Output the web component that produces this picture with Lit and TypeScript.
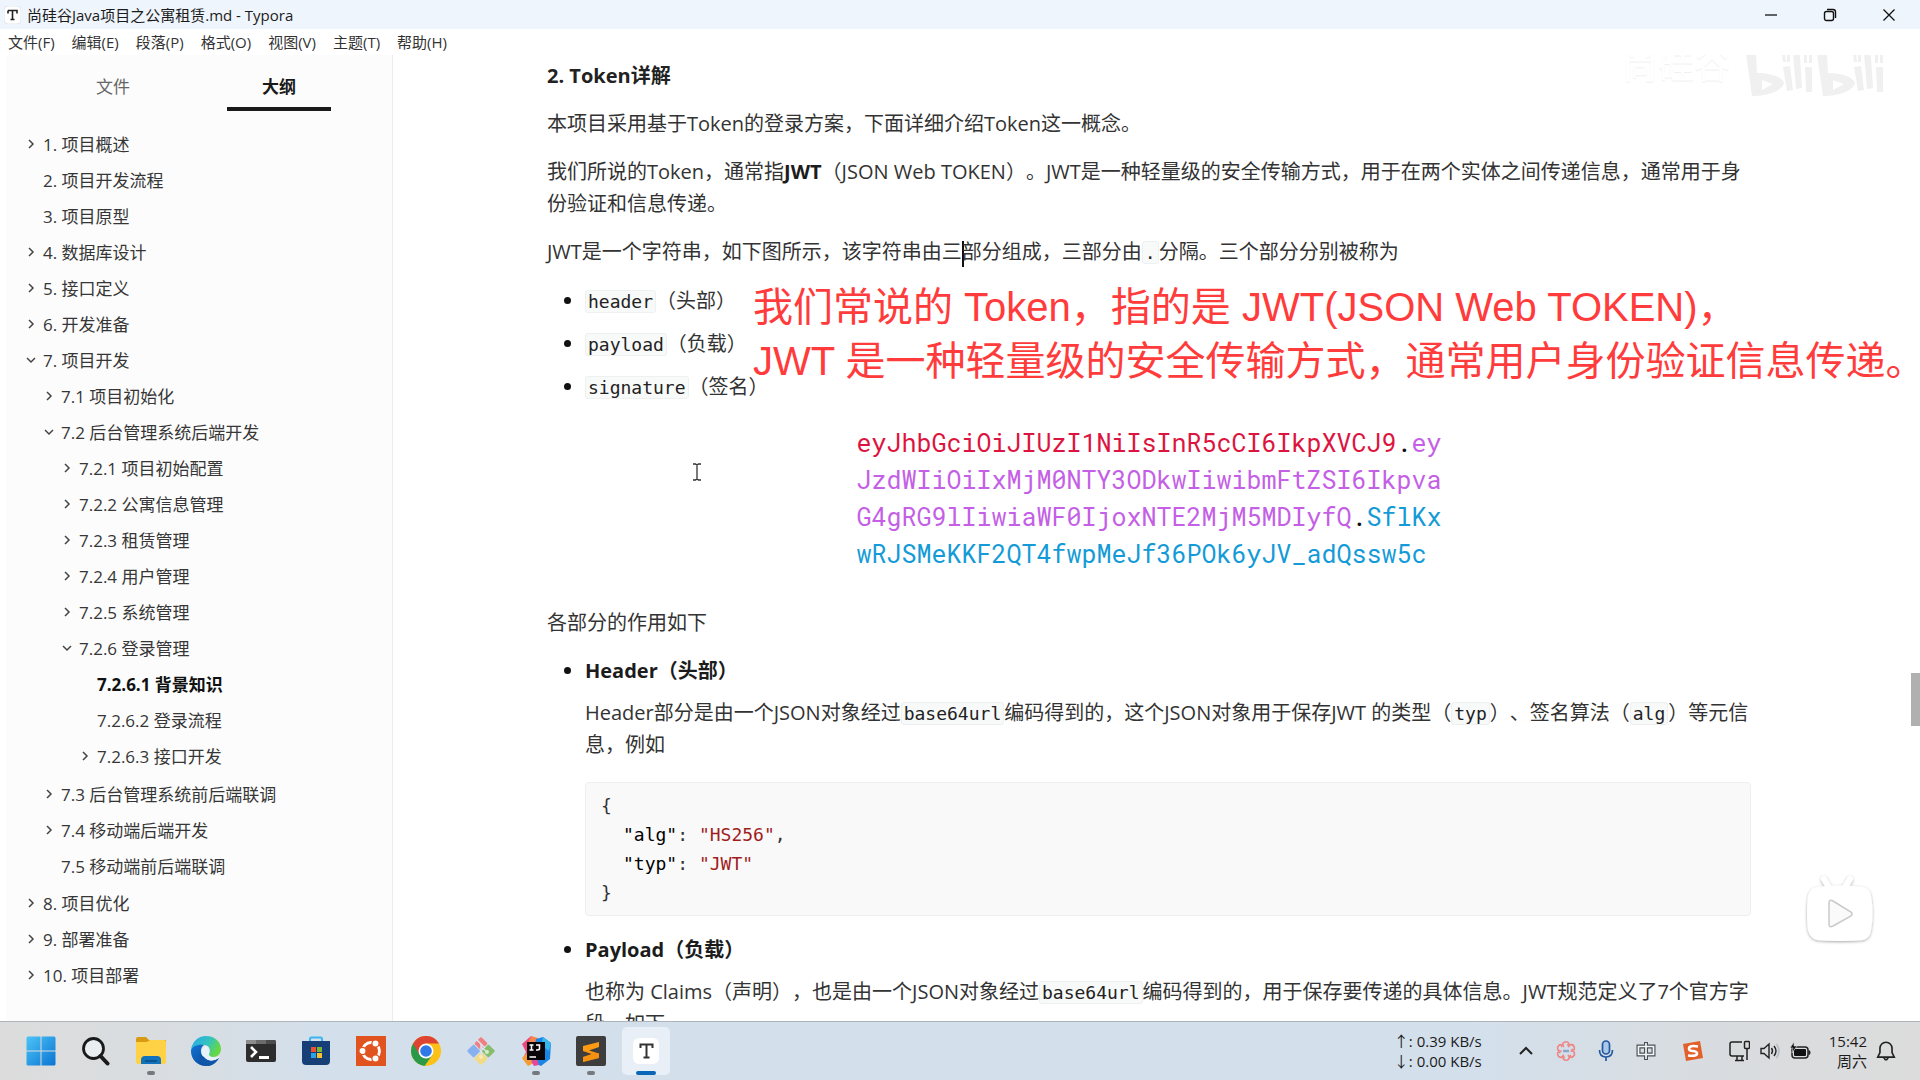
import { LitElement, html, css, svg, nothing } from "lit";
import { customElement, property } from "lit/decorators.js";
import { classMap } from "lit/directives/class-map.js";

interface OutlineNode {
  label: string;
  state?: "open" | "closed";
  current?: boolean;
  children?: OutlineNode[];
}

const MENUS = ["文件(F)", "编辑(E)", "段落(P)", "格式(O)", "视图(V)", "主题(T)", "帮助(H)"];

const OUTLINE: OutlineNode[] = [
  { label: "1. 项目概述", state: "closed" },
  { label: "2. 项目开发流程" },
  { label: "3. 项目原型" },
  { label: "4. 数据库设计", state: "closed" },
  { label: "5. 接口定义", state: "closed" },
  { label: "6. 开发准备", state: "closed" },
  {
    label: "7. 项目开发",
    state: "open",
    children: [
      { label: "7.1 项目初始化", state: "closed" },
      {
        label: "7.2 后台管理系统后端开发",
        state: "open",
        children: [
          { label: "7.2.1 项目初始配置", state: "closed" },
          { label: "7.2.2 公寓信息管理", state: "closed" },
          { label: "7.2.3 租赁管理", state: "closed" },
          { label: "7.2.4 用户管理", state: "closed" },
          { label: "7.2.5 系统管理", state: "closed" },
          {
            label: "7.2.6 登录管理",
            state: "open",
            children: [
              { label: "7.2.6.1 背景知识", current: true },
              { label: "7.2.6.2 登录流程" },
              { label: "7.2.6.3 接口开发", state: "closed" },
            ],
          },
        ],
      },
      { label: "7.3 后台管理系统前后端联调", state: "closed" },
      { label: "7.4 移动端后端开发", state: "closed" },
      { label: "7.5 移动端前后端联调" },
    ],
  },
  { label: "8. 项目优化", state: "closed" },
  { label: "9. 部署准备", state: "closed" },
  { label: "10. 项目部署", state: "closed" },
];

const base = css`
  * {
    box-sizing: border-box;
  }
  button {
    border: 0;
    padding: 0;
    background: none;
    font: inherit;
    color: inherit;
    display: flex;
    align-items: center;
    justify-content: center;
  }
  svg {
    display: block;
  }
`;

@customElement("title-bar")
class TitleBar extends LitElement {
  static styles = [
    base,
    css`
      :host {
        display: block;
        color: #1b1b1b;
        font-size: 15px;
      }
      .bar {
        display: flex;
        align-items: center;
        height: 29px;
        padding: 0 2px 0 4px;
        background: #eff5fc;
      }
      .name {
        flex: 1;
        margin-left: 6px;
      }
      .controls {
        display: flex;
      }
      .controls button {
        width: 59px;
        height: 29px;
      }
      .menus {
        display: flex;
        gap: 17px;
        height: 26px;
        padding: 0 0 2px 8px;
        background: #fff;
        color: #333;
      }
    `,
  ];

  render() {
    return html`
      <header class="bar">
        <svg width="17" height="18" viewBox="0 0 17 18" aria-hidden="true">
          <rect width="17" height="18" rx="4" fill="#fff" stroke="#e3e6ea" />
          <path d="M4 4.500h9v3M4 4.500v3M8.500 4.500v9M6.500 13.500h4" fill="none" stroke="#222" stroke-width="1.600" />
        </svg>
        <span class="name">尚硅谷Java项目之公寓租赁.md - Typora</span>
        <div class="controls">
          <button aria-label="最小化">
            <svg width="14" height="14" viewBox="0 0 14 14"><path d="M1 7h12" stroke="#111" stroke-width="1.300" /></svg>
          </button>
          <button aria-label="还原">
            <svg width="14" height="14" viewBox="0 0 14 14" fill="none" stroke="#111" stroke-width="1.400">
              <rect x="1.500" y="3.500" width="9" height="9" rx="2" />
              <path d="M4 1.500h6a2.500 2.500 0 0 1 2.500 2.500v6" />
            </svg>
          </button>
          <button aria-label="关闭">
            <svg width="14" height="14" viewBox="0 0 14 14"><path d="M1.500 1.500l11 11M12.500 1.500l-11 11" stroke="#111" stroke-width="1.300" /></svg>
          </button>
        </div>
      </header>
      <nav class="menus">${MENUS.map((m) => html`<button>${m}</button>`)}</nav>
    `;
  }
}

@customElement("outline-tree")
class OutlineTree extends LitElement {
  @property({ attribute: false }) nodes: OutlineNode[] = [];

  static styles = [
    base,
    css`
      ul {
        list-style: none;
        margin: 0;
        padding: 0;
      }
      ul ul {
        padding: 0 0 1px 18px;
      }
      .row {
        display: flex;
        align-items: center;
        height: 36px;
      }
      .toggle {
        width: 24px;
        height: 36px;
        padding-top: 2px;
      }
      a {
        color: #363636;
        text-decoration: none;
        white-space: nowrap;
      }
      .current a {
        color: #111;
        font-weight: 700;
      }
    `,
  ];

  private branch(nodes: OutlineNode[]): unknown {
    return html`<ul>
      ${nodes.map(
        (n) => html`<li>
          <div class=${classMap({ row: true, current: !!n.current })}>
            ${n.state
              ? html`<button class="toggle" aria-label="展开或折叠">
                  <svg width="10" height="10" viewBox="0 0 10 10" fill="none" stroke="#444" stroke-width="1.500">
                    ${n.state === "open" ? svg`<path d="M1 3l4 4l4-4" />` : svg`<path d="M3 1l4 4l-4 4" />`}
                  </svg>
                </button>`
              : html`<span class="toggle"></span>`}
            <a href="#">${n.label}</a>
          </div>
          ${n.children ? this.branch(n.children) : nothing}
        </li>`,
      )}
    </ul>`;
  }

  render() {
    return this.branch(this.nodes);
  }
}

@customElement("side-bar")
class SideBar extends LitElement {
  static styles = [
    base,
    css`
      :host {
        display: block;
        margin-left: 6px;
        border-right: 1px solid #ececec;
        background: #fcfcfc;
        font-size: 17px;
      }
      .tabs {
        display: flex;
        padding: 9px 30px 0 24px;
      }
      .tabs button {
        flex: 1;
        height: 47px;
        color: #666;
      }
      .tabs span {
        padding: 2px 35px 0;
        line-height: 41px;
        border-bottom: 4px solid transparent;
      }
      .tabs .active {
        color: #1a1a1a;
        font-weight: 700;
      }
      .active span {
        border-color: #1a1a1a;
      }
      outline-tree {
        display: block;
        padding: 14px 0 0 13px;
      }
    `,
  ];

  render() {
    return html`
      <div class="tabs">
        <button><span>文件</span></button>
        <button class="active"><span>大纲</span></button>
      </div>
      <outline-tree .nodes=${OUTLINE}></outline-tree>
    `;
  }
}

@customElement("doc-view")
class DocView extends LitElement {
  static styles = [
    base,
    css`
      :host {
        display: block;
        position: relative;
        overflow: hidden;
        background: #fff;
        color: #333;
        font-size: 20px;
        line-height: 32px;
      }
      article {
        max-width: 1204px;
        margin: 0 auto;
        padding-top: 5px;
      }
      .scroller {
        padding-right: 15px;
      }
      h4 {
        margin: 0;
        font-size: 20px;
        color: #222;
      }
      p {
        margin: 16px 0;
      }
      strong {
        color: #1c1c1c;
      }
      code {
        padding: 0 2px;
        border: 1px solid #eef1f2;
        border-radius: 3px;
        background: #f8f9f9;
        font-family: "DejaVu Sans Mono", monospace;
        font-size: 18px;
        line-height: 24px;
        color: #222;
      }
      ul {
        margin: 17px 0 0;
        padding-left: 38px;
      }
      li::marker {
        color: #111;
      }
      .parts li + li {
        margin-top: 11px;
      }
      .caret {
        display: inline-block;
        width: 2px;
        height: 26px;
        margin-right: -2px;
        vertical-align: middle;
        background: #111;
      }
      .token {
        width: max-content;
        margin: 21px auto 35px;
        font-family: "Roboto Mono", "DejaVu Sans Mono", monospace;
        font-size: 25px;
        line-height: 37px;
        color: #111;
      }
      .red {
        color: #dc1440;
      }
      .violet {
        color: #c45fe6;
      }
      .blue {
        color: #149bd7;
      }
      .roles {
        margin-top: 15px;
      }
      .roles p {
        margin: 10px 0 0;
      }
      .roles li + li {
        margin-top: 18px;
      }
      .block {
        margin: 21px 0 0;
        padding: 8px 15px;
        border: 1px solid #eceeef;
        border-radius: 4px;
        background: #f9f9f9;
        font-family: "DejaVu Sans Mono", monospace;
        font-size: 18px;
        line-height: 29px;
        color: #333;
      }
      .entry {
        padding-left: 22px;
      }
      .key {
        color: #000;
      }
      .str {
        color: #a11d1d;
      }
      .thumb {
        position: absolute;
        right: 0;
        top: 618px;
        width: 9px;
        height: 53px;
        background: #b0b0b0;
      }
      .caption {
        position: absolute;
        left: 360px;
        top: 225px;
        margin: 0;
        color: #ff3b3b;
        font-family: "Liberation Sans", "Noto Sans CJK SC", sans-serif;
        font-size: 40px;
        line-height: 54px;
        white-space: nowrap;
      }
      .brand {
        position: absolute;
        right: 34px;
        top: -20px;
        display: flex;
        align-items: center;
        gap: 14px;
        color: #fff;
        font-size: 36px;
        line-height: 62px;
        text-shadow: 0 1px 0 #f0f0f0;
      }
      .player {
        position: absolute;
        right: 39px;
        top: 816px;
      }
      .pointer {
        position: absolute;
        left: 299px;
        top: 408px;
      }
    `,
  ];

  render() {
    return html`
      <div class="scroller">
        <article>
          <h4>2. Token详解</h4>
          <p>本项目采用基于Token的登录方案，下面详细介绍Token这一概念。</p>
          <p>我们所说的Token，通常指<strong>JWT</strong>（JSON Web TOKEN）。JWT是一种轻量级的安全传输方式，用于在两个实体之间传递信息，通常用于身份验证和信息传递。</p>
          <p>JWT是一个字符串，如下图所示，该字符串由三<span class="caret"></span>部分组成，三部分由<code>.</code>分隔。三个部分分别被称为</p>
          <ul class="parts">
            <li><code>header</code>（头部）</li>
            <li><code>payload</code>（负载）</li>
            <li><code>signature</code>（签名）</li>
          </ul>
          <div class="token">
            <div><span class="red">eyJhbGciOiJIUzI1NiIsInR5cCI6IkpXVCJ9</span>.<span class="violet">ey</span></div>
            <div class="violet">JzdWIiOiIxMjM0NTY3ODkwIiwibmFtZSI6Ikpva</div>
            <div><span class="violet">G4gRG9lIiwiaWF0IjoxNTE2MjM5MDIyfQ</span>.<span class="blue">SflKx</span></div>
            <div class="blue">wRJSMeKKF2QT4fwpMeJf36POk6yJV_adQssw5c</div>
          </div>
          <p>各部分的作用如下</p>
          <ul class="roles">
            <li>
              <strong>Header（头部）</strong>
              <p>Header部分是由一个JSON对象经过<code>base64url</code>编码得到的，这个JSON对象用于保存JWT 的类型（<code>typ</code>）、签名算法（<code>alg</code>）等元信息，例如</p>
              <div class="block">
                <div>{</div>
                <div class="entry"><span class="key">"alg"</span>: <span class="str">"HS256"</span>,</div>
                <div class="entry"><span class="key">"typ"</span>: <span class="str">"JWT"</span></div>
                <div>}</div>
              </div>
            </li>
            <li>
              <strong>Payload（负载）</strong>
              <p>也称为 Claims（声明），也是由一个JSON对象经过<code>base64url</code>编码得到的，用于保存要传递的具体信息。JWT规范定义了7个官方字段，如下</p>
            </li>
          </ul>
        </article>
      </div>
      <div class="thumb"></div>
      <p class="caption">我们常说的 Token，指的是 JWT(JSON Web TOKEN)，<br />JWT 是一种轻量级的安全传输方式，通常用户身份验证信息传递。</p>
      <div class="brand">
        <span>尚硅谷</span>
        ${this.logo()}
      </div>
      <svg class="pointer" width="10" height="18" viewBox="0 0 10 18" fill="none" stroke="#333" stroke-width="1.300">
        <path d="M1 1h2.500l1.500 1l1.500-1h2.500M5 2v14M1 17h2.500l1.500-1l1.500 1h2.500" />
      </svg>
      ${this.player()}
    `;
  }

  private logo() {
    const half = (x: number) => svg`<g transform="translate(${x} 0)">
      <path fill-rule="evenodd" d="M0 5L11 0L13 38C27 38 38 42 40 48C38 56 24 61 8 61ZM18 45V55L29 49Z" />
      <path d="M38 19l3-1 1 9h-3zM43 18h3v9h-3zM39 32l7-1 3 24-6 1zM48 7l7-1 3 47-6 1zM60 19h3v9h-3zM65 19h3v9h-3zM61 32h7v25h-6z" />
    </g>`;
    return svg`<svg width="142" height="62" viewBox="0 0 142 62" fill="#f0f0f0" aria-label="bilibili">${half(0)}${half(71)}</svg>`;
  }

  private player() {
    return html`<svg class="player" width="82" height="82" viewBox="0 0 82 82" aria-label="播放">
      <defs>
        <filter id="soft" x="-20%" y="-20%" width="140%" height="140%">
          <feDropShadow dx="0" dy="1" stdDeviation="1.500" flood-color="#000" flood-opacity="0.35" />
        </filter>
      </defs>
      <g filter="url(#soft)">
        <path d="M25 8l6 10M51 8l-6 10" stroke="#fff" stroke-width="6" stroke-linecap="round" />
        <path d="M18 16Q41 13 64 16Q71 17 72 25Q75 42 72 59Q71 67 64 69Q41 71 18 69Q11 67 9 59Q7 42 9 25Q11 17 18 16Z" fill="#fff" />
      </g>
      <path d="M30 32Q30 28 34 30L52 41Q54 43 52 45L34 55Q30 57 30 53Z" fill="#fafafa" stroke="#c9c9c9" stroke-width="1.500" />
    </svg>`;
  }
}

const APPS: { name: string; run?: boolean; active?: boolean; art: unknown }[] = [
  {
    name: "开始",
    art: svg`<defs><linearGradient id="w" x1="0" y1="0" x2="1" y2="1"><stop offset="0" stop-color="#4cc4f8" /><stop offset="1" stop-color="#0a74d1" /></linearGradient></defs>
      <path d="M2 .500h12.500v14H.500V2Q.500.500 2 .500zM15.500.500H28q1.500 0 1.500 1.500v12.500h-14zM.500 15.500h14v14H2Q.500 29.500.500 28zM15.500 15.500h14V28q0 1.500-1.500 1.500H15.500z" fill="url(#w)" />`,
  },
  {
    name: "搜索",
    art: svg`<circle cx="12.500" cy="12.500" r="10" fill="#e9eef2" stroke="#1a1a1a" stroke-width="2.800" /><path d="M19.500 20l7 7.500" stroke="#1a1a1a" stroke-width="4" stroke-linecap="round" />`,
  },
  {
    name: "文件资源管理器",
    run: true,
    art: svg`<path d="M0 3q0-2 2-2h8l3 3h17v5H0z" fill="#d79a10" /><path d="M0 6h11l3-2h14q2 0 2 2v20q0 2-2 2H2q-2 0-2-2z" fill="#ffd145" /><path d="M5 28v-4q0-4 4-4h12q4 0 4 4v4z" fill="#1272bd" /><path d="M9 24h12v2H9z" fill="#0b5591" />`,
  },
  {
    name: "Edge",
    art: svg`<defs><linearGradient id="e1" x1="0" y1="0" x2="1" y2=".4"><stop offset="0" stop-color="#28a8ea" /><stop offset=".6" stop-color="#33c3c0" /><stop offset="1" stop-color="#66d843" /></linearGradient><linearGradient id="e2" x1="0" y1="0" x2="1" y2="1"><stop offset="0" stop-color="#1173d4" /><stop offset="1" stop-color="#0b3f8f" /></linearGradient></defs>
      <path d="M0 14C1 6 7 0 15 0C24 0 30 6 30 13C30 18 26 21 22 21C19 21 17 20 18 18C20 15 19 9 13 9C6 9 1 13 0 17Z" fill="url(#e1)" />
      <path d="M0 15C1 10 7 8 13 9C10 11 9 15 11 19C14 25 21 26 28 22C25 27 20 30 15 30C6 30 0 23 0 15Z" fill="url(#e2)" />
      <path d="M11 13C10 17 11 21 15 23C19 26 24 25 28 22C29 21 28 20 27 21C23 22 18 21 18 18C19 15 18 11 15 10C13 10 12 11 11 13Z" fill="#e9f4fb" opacity=".9" />
      <path d="M13 21C17 26 23 26 28 22C26 26 22 29 18 30C12 30 7 24 9 16C9 18 11 20 13 21Z" fill="#1056a8" />`,
  },
  {
    name: "终端",
    art: svg`<rect y="4" width="30" height="22" rx="2" fill="#2d2d2d" /><path d="M0 8V6q0-2 2-2h8v4z" fill="#8d8d8d" /><path d="M10 4h10v4H10z" fill="#6b6b6b" /><path d="M20 4h8q2 0 2 2v2H20z" fill="#4c4c4c" /><path d="M5 11l5 5-5 5" fill="none" stroke="#fff" stroke-width="2.600" /><path d="M13 21.500h10" stroke="#fff" stroke-width="3" />`,
  },
  {
    name: "Microsoft Store",
    art: svg`<path d="M9 7V3q0-1.500 1.500-1.500h9Q21 1.500 21 3v4" fill="none" stroke="#3bb5ef" stroke-width="2" /><path d="M1 5h28v20q0 4-4 4H5q-4 0-4-4z" fill="#163f77" /><path d="M10 11h5v5h-5z" fill="#ef5230" /><path d="M16 11h5v5h-5z" fill="#7cb82f" /><path d="M10 17h5v5h-5z" fill="#2aa3e6" /><path d="M16 17h5v5h-5z" fill="#fbc02a" />`,
  },
  {
    name: "Ubuntu",
    art: svg`<rect width="30" height="30" fill="#e2541f" /><circle cx="15" cy="15" r="8.500" fill="none" stroke="#fff" stroke-width="2.800" /><g fill="#fff" stroke="#e2541f" stroke-width="1.300"><circle cx="6.500" cy="15" r="3.600" /><circle cx="19.500" cy="7.500" r="3.600" /><circle cx="19.500" cy="22.500" r="3.600" /></g>`,
  },
  {
    name: "Chrome",
    art: svg`<circle cx="15" cy="15" r="15" fill="#fbc116" /><path d="M15 15L2 7.500A15 15 0 0 0 13.500 29.900L21.500 18.800z" fill="#2a9a48" /><path d="M2 7.500A15 15 0 0 1 28 7.500H15L8.500 18.800z" fill="#df4332" /><circle cx="15" cy="15" r="7.500" fill="#fff" /><circle cx="15" cy="15" r="5.800" fill="#2f78e8" />`,
  },
  {
    name: "Git Bash",
    art: svg`<g transform="rotate(45 15 15)"><rect x="5" y="5" width="9.500" height="9.500" rx="1" fill="#ef7f83" /><rect x="15.500" y="5" width="9.500" height="9.500" rx="1" fill="#85bd6c" /><rect x="5" y="15.500" width="9.500" height="9.500" rx="1" fill="#86b0ef" /><rect x="15.500" y="15.500" width="9.500" height="9.500" rx="1" fill="#f2db83" /></g><path d="M11 4l8 8M15 8v13M15 11l6 5" stroke="#dbe5ee" stroke-width="1.500" fill="none" /><circle cx="15" cy="21" r="2" fill="#f5eab8" /><circle cx="21" cy="16" r="2" fill="#d5ecc8" />`,
  },
  {
    name: "IntelliJ IDEA",
    run: true,
    art: svg`<path d="M1 8l9-8 6 4-6 14-8 4 3-6z" fill="#f2477c" /><path d="M1 22l8-8 6 12-8 4z" fill="#f59a34" /><path d="M10 0l7 2-3 8-7-2z" fill="#f8844e" /><path d="M15 3l7-2 8 6-1 16-9 7-9-4z" fill="#1a86e4" /><path d="M22 1l8 6-2 8-8-6z" fill="#35b6ee" /><path d="M10 25l6-2 2 6-5 1z" fill="#e3489f" /><rect x="6" y="6" width="18" height="18" fill="#0a0508" /><path d="M8.500 9h4M10.500 9v5M8.500 14h4M15 9h3.500v3.500q0 1.500-2 1.500h-1.500M8.500 21h6.500" fill="none" stroke="#fff" stroke-width="1.500" />`,
  },
  {
    name: "Sublime Text",
    run: true,
    art: svg`<rect width="30" height="30" rx="2" fill="#3d3d3d" /><path d="M23 6v5l-10 3.500 10 3v4.500L7 26v-5l9-3-9-3v-5z" fill="#ff9a12" /><path d="M7 15l16 2.500v4.500L7 26v-5l9-3z" fill="#f08a10" opacity=".6" />`,
  },
  {
    name: "Typora",
    run: true,
    active: true,
    art: svg`<rect x="2" y="2" width="26" height="26" rx="6" fill="#fff" /><path d="M9.500 12V8.500h12V12M15.500 8.500v13M12.500 21.500h6" fill="none" stroke="#333" stroke-width="2" />`,
  },
];

@customElement("task-bar")
class TaskBar extends LitElement {
  static styles = [
    base,
    css`
      :host {
        display: block;
        border-top: 1px solid #aeb5ba;
        background: linear-gradient(90deg, #dcdcdc 0, #d9dde0 8%, #d3dfea 16%, #d3e0ec 76%, #d9dcdf 90%, #dcdcdc 100%);
        color: #1b1b1b;
        font-size: 15px;
        line-height: 20px;
      }
      .bar {
        display: flex;
        align-items: center;
        height: 58px;
        padding: 0 22px 0 17px;
      }
      .apps {
        display: flex;
        flex: 1;
        gap: 7px;
      }
      .app {
        position: relative;
        width: 48px;
        height: 48px;
        border-radius: 5px;
      }
      .active {
        background: #e8eff7;
      }
      .run::after {
        content: "";
        position: absolute;
        left: 20px;
        bottom: 0;
        width: 8px;
        height: 4px;
        border-radius: 2px;
        background: #75797d;
      }
      .active::after {
        left: 14px;
        width: 20px;
        background: #0b66b8;
      }
      .net {
        margin-right: 24px;
      }
      .slot {
        width: 40px;
        height: 40px;
      }
      .wide {
        width: 54px;
      }
      .sys {
        display: flex;
        gap: 10px;
        padding: 0 18px 0 9px;
        height: 40px;
      }
      .clock {
        text-align: right;
        margin-right: 7px;
      }
      .clock span,
      .net span {
        display: block;
      }
    `,
  ];

  render() {
    return html`<footer class="bar">
      <div class="apps">
        ${APPS.map(
          (a) => html`<button class=${classMap({ app: true, run: !!a.run, active: !!a.active })} aria-label=${a.name}>
            <svg width="30" height="30" viewBox="0 0 30 30">${a.art}</svg>
          </button>`,
        )}
      </div>
      <div class="net"><span>↑: 0.39 KB/s</span><span>↓: 0.00 KB/s</span></div>
      <button class="slot" aria-label="显示隐藏的图标">
        <svg width="16" height="10" viewBox="0 0 16 10"><path d="M2 8l6-6 6 6" fill="none" stroke="#222" stroke-width="2" /></svg>
      </button>
      <button class="slot" aria-label="向日葵">
        <svg width="22" height="22" viewBox="0 0 22 22" fill="none" stroke="#ee8583" stroke-width="1.600">
          ${[0, 60, 120, 180, 240, 300].map((r) => svg`<path transform="rotate(${r} 11 11)" d="M9 7C6 4 9 1 12 2C15 3 14 5 12 5" />`)}
          <path d="M8 11h6" stroke="#8aa7cf" stroke-width="2.500" />
        </svg>
      </button>
      <button class="slot" aria-label="麦克风">
        <svg width="16" height="22" viewBox="0 0 16 22" fill="none" stroke="#24599f" stroke-width="1.700">
          <rect x="4.500" y="1" width="7" height="13" rx="3.500" fill="#a9c8ea" />
          <path d="M1.500 10q0 7 6.500 7t6.500-7M8 17v4" />
        </svg>
      </button>
      <button class="slot" aria-label="输入法">
        <svg width="20" height="20" viewBox="0 0 20 20" fill="none">
          <path d="M2.500 5.500h15v8h-15zM10 1v18" stroke="#4b5056" stroke-width="4" />
          <path d="M2.500 5.500h15v8h-15zM10 2v16" stroke="#f3f7fa" stroke-width="1.700" />
        </svg>
      </button>
      <button class="slot wide" aria-label="搜狗输入法">
        <svg width="20" height="20" viewBox="0 0 20 20">
          <path d="M0 3l17-3 3 17-17 3z" fill="#e2602a" />
          <path d="M15 5.500Q6 4 6 7.500Q6 10 10 10Q14.500 10.500 14 13Q13 15.500 5 14.500" fill="none" stroke="#fff" stroke-width="2.600" />
        </svg>
      </button>
      <button class="sys" aria-label="网络、音量和电池">
        <svg width="21" height="22" viewBox="0 0 21 22" fill="none" stroke="#222" stroke-width="1.500">
          <path d="M13 2H3Q1 2 1 4v10q0 2 2 2h12M6 20.500h9M8 16v4M13 16v4M18 9v11" />
          <rect x="15.500" y="1.500" width="5" height="7" rx="1" />
        </svg>
        <svg width="20" height="18" viewBox="0 0 20 18" fill="none" stroke="#222" stroke-width="1.400">
          <path d="M1 6.500h3l5-4.500v14l-5-4.500h-3zM11.500 6q2 3 0 6M14 4q4 5 0 10" />
          <path d="M16.500 2q5 7 0 14" stroke="#b4bcc3" />
        </svg>
        <svg width="21" height="18" viewBox="0 0 21 18">
          <rect x="2" y="5" width="16" height="11" rx="3" fill="none" stroke="#222" stroke-width="1.500" />
          <rect x="4" y="7" width="12" height="7" rx="1" fill="#111" />
          <path d="M18.500 8q2 0 2 2.500t-2 2.500z" fill="#222" />
          <path d="M4 0L0 6h3l-1 5 5-7H4z" fill="#111" stroke="#d8dee3" stroke-width=".600" />
        </svg>
      </button>
      <div class="clock"><span>15:42</span><span>周六</span></div>
      <button aria-label="通知">
        <svg width="24" height="22" viewBox="0 0 18 20" fill="none" stroke="#222" stroke-width="1.500">
          <path d="M1.500 15.500l2-4V7.500a5.500 5.500 0 0 1 11 0v4l2 4zM7 16q2 4 4 0" />
        </svg>
      </button>
    </footer>`;
  }
}

@customElement("app-root")
class AppRoot extends LitElement {
  static styles = css`
    :host {
      display: grid;
      grid-template-columns: 393px minmax(0, 1fr);
      grid-template-rows: auto minmax(0, 1fr) auto;
      height: 100vh;
      overflow: hidden;
      background: #fff;
      font-family: "Open Sans", "Noto Sans CJK SC", sans-serif;
      text-spacing-trim: space-all;
    }
    title-bar,
    task-bar {
      grid-column: 1 / -1;
    }
  `;

  render() {
    return html`
      <title-bar lang="zh-CN"></title-bar>
      <side-bar lang="zh-CN"></side-bar>
      <doc-view lang="zh-CN"></doc-view>
      <task-bar lang="zh-CN"></task-bar>
    `;
  }
}
